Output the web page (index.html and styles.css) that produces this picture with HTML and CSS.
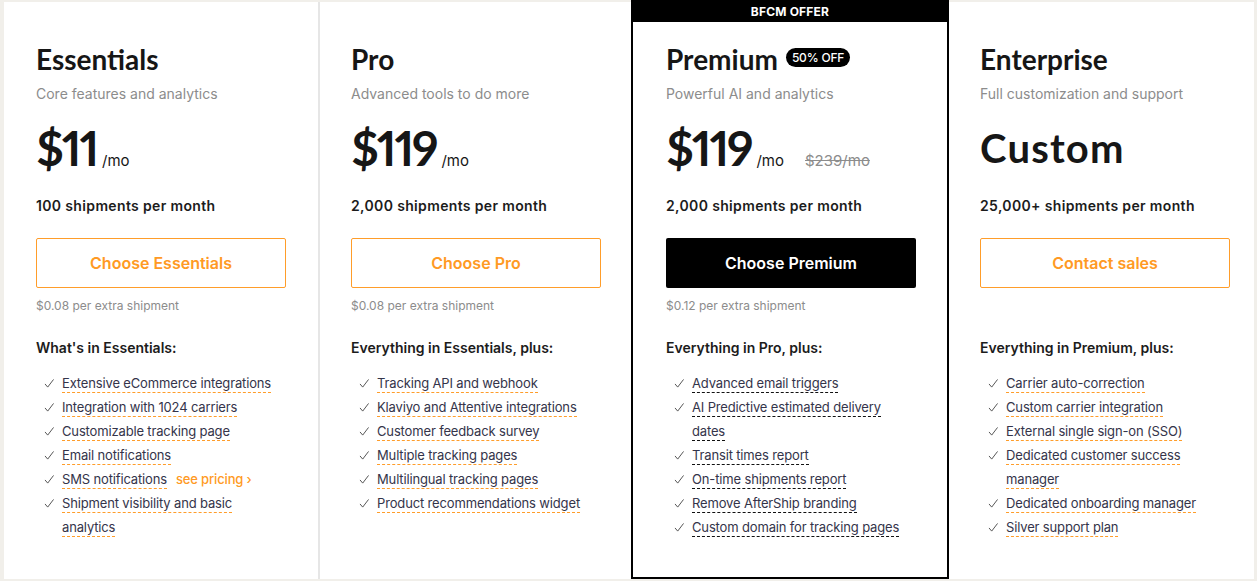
FILE: index.html
```html
<!DOCTYPE html>
<html lang="en">
<head>
<meta charset="utf-8">
<title>Pricing</title>
<link rel="stylesheet" href="styles.css">
</head>
<body>
<div class="wrap">
  <div class="plans">
    <section class="card card-ess">
      <div class="card-body">
        <div class="title-row"><h2 class="title">Essentials</h2></div>
        <p class="subtitle">Core features and analytics</p>
        <div class="price-row"><span class="price">$11</span><span class="per">/mo</span></div>
        <p class="quota">100 shipments per month</p>
        <a class="btn btn-outline" href="#">Choose Essentials</a>
        <p class="extra">$0.08 per extra shipment</p>
        <h3 class="feat-head">What's in Essentials:</h3>
        <ul class="feats">
          <li><svg class="chk" viewBox="0 0 12 10"><polyline points="1,5.5 4,9 10.5,0.5"/></svg><div class="txt"><span class="u">Extensive eCommerce integrations</span></div></li>
          <li><svg class="chk" viewBox="0 0 12 10"><polyline points="1,5.5 4,9 10.5,0.5"/></svg><div class="txt"><span class="u">Integration with 1024 carriers</span></div></li>
          <li><svg class="chk" viewBox="0 0 12 10"><polyline points="1,5.5 4,9 10.5,0.5"/></svg><div class="txt"><span class="u">Customizable tracking page</span></div></li>
          <li><svg class="chk" viewBox="0 0 12 10"><polyline points="1,5.5 4,9 10.5,0.5"/></svg><div class="txt"><span class="u">Email notifications</span></div></li>
          <li><svg class="chk" viewBox="0 0 12 10"><polyline points="1,5.5 4,9 10.5,0.5"/></svg><div class="txt"><span class="u">SMS notifications</span><a class="see" href="#">see pricing ›</a></div></li>
          <li><svg class="chk" viewBox="0 0 12 10"><polyline points="1,5.5 4,9 10.5,0.5"/></svg><div class="txt"><span class="u">Shipment visibility and basic analytics</span></div></li>
        </ul>
      </div>
    </section>

    <section class="card card-pro">
      <div class="card-body">
        <div class="title-row"><h2 class="title">Pro</h2></div>
        <p class="subtitle">Advanced tools to do more</p>
        <div class="price-row"><span class="price">$119</span><span class="per">/mo</span></div>
        <p class="quota">2,000 shipments per month</p>
        <a class="btn btn-outline" href="#">Choose Pro</a>
        <p class="extra">$0.08 per extra shipment</p>
        <h3 class="feat-head">Everything in Essentials, plus:</h3>
        <ul class="feats">
          <li><svg class="chk" viewBox="0 0 12 10"><polyline points="1,5.5 4,9 10.5,0.5"/></svg><div class="txt"><span class="u">Tracking API and webhook</span></div></li>
          <li><svg class="chk" viewBox="0 0 12 10"><polyline points="1,5.5 4,9 10.5,0.5"/></svg><div class="txt"><span class="u">Klaviyo and Attentive integrations</span></div></li>
          <li><svg class="chk" viewBox="0 0 12 10"><polyline points="1,5.5 4,9 10.5,0.5"/></svg><div class="txt"><span class="u">Customer feedback survey</span></div></li>
          <li><svg class="chk" viewBox="0 0 12 10"><polyline points="1,5.5 4,9 10.5,0.5"/></svg><div class="txt"><span class="u">Multiple tracking pages</span></div></li>
          <li><svg class="chk" viewBox="0 0 12 10"><polyline points="1,5.5 4,9 10.5,0.5"/></svg><div class="txt"><span class="u">Multilingual tracking pages</span></div></li>
          <li><svg class="chk" viewBox="0 0 12 10"><polyline points="1,5.5 4,9 10.5,0.5"/></svg><div class="txt"><span class="u">Product recommendations widget</span></div></li>
        </ul>
      </div>
    </section>

    <section class="card card-premium">
      <div class="band">BFCM OFFER</div>
      <div class="card-body">
        <div class="title-row"><h2 class="title">Premium</h2><span class="badge">50% OFF</span></div>
        <p class="subtitle">Powerful AI and analytics</p>
        <div class="price-row"><span class="price">$119</span><span class="per">/mo</span><s class="old">$239/mo</s></div>
        <p class="quota">2,000 shipments per month</p>
        <a class="btn btn-solid" href="#">Choose Premium</a>
        <p class="extra">$0.12 per extra shipment</p>
        <h3 class="feat-head">Everything in Pro, plus:</h3>
        <ul class="feats feats-dark">
          <li><svg class="chk" viewBox="0 0 12 10"><polyline points="1,5.5 4,9 10.5,0.5"/></svg><div class="txt"><span class="u">Advanced email triggers</span></div></li>
          <li><svg class="chk" viewBox="0 0 12 10"><polyline points="1,5.5 4,9 10.5,0.5"/></svg><div class="txt"><span class="u">AI Predictive estimated delivery dates</span></div></li>
          <li><svg class="chk" viewBox="0 0 12 10"><polyline points="1,5.5 4,9 10.5,0.5"/></svg><div class="txt"><span class="u">Transit times report</span></div></li>
          <li><svg class="chk" viewBox="0 0 12 10"><polyline points="1,5.5 4,9 10.5,0.5"/></svg><div class="txt"><span class="u">On-time shipments report</span></div></li>
          <li><svg class="chk" viewBox="0 0 12 10"><polyline points="1,5.5 4,9 10.5,0.5"/></svg><div class="txt"><span class="u">Remove AfterShip branding</span></div></li>
          <li><svg class="chk" viewBox="0 0 12 10"><polyline points="1,5.5 4,9 10.5,0.5"/></svg><div class="txt"><span class="u">Custom domain for tracking pages</span></div></li>
        </ul>
      </div>
    </section>

    <section class="card card-ent">
      <div class="card-body">
        <div class="title-row"><h2 class="title">Enterprise</h2></div>
        <p class="subtitle">Full customization and support</p>
        <div class="price-row"><span class="price price-custom">Custom</span></div>
        <p class="quota">25,000+ shipments per month</p>
        <a class="btn btn-outline" href="#">Contact sales</a>
        <p class="extra">&nbsp;</p>
        <h3 class="feat-head">Everything in Premium, plus:</h3>
        <ul class="feats">
          <li><svg class="chk" viewBox="0 0 12 10"><polyline points="1,5.5 4,9 10.5,0.5"/></svg><div class="txt"><span class="u">Carrier auto-correction</span></div></li>
          <li><svg class="chk" viewBox="0 0 12 10"><polyline points="1,5.5 4,9 10.5,0.5"/></svg><div class="txt"><span class="u">Custom carrier integration</span></div></li>
          <li><svg class="chk" viewBox="0 0 12 10"><polyline points="1,5.5 4,9 10.5,0.5"/></svg><div class="txt"><span class="u">External single sign-on (SSO)</span></div></li>
          <li><svg class="chk" viewBox="0 0 12 10"><polyline points="1,5.5 4,9 10.5,0.5"/></svg><div class="txt"><span class="u">Dedicated customer success manager</span></div></li>
          <li><svg class="chk" viewBox="0 0 12 10"><polyline points="1,5.5 4,9 10.5,0.5"/></svg><div class="txt"><span class="u">Dedicated onboarding manager</span></div></li>
          <li><svg class="chk" viewBox="0 0 12 10"><polyline points="1,5.5 4,9 10.5,0.5"/></svg><div class="txt"><span class="u">Silver support plan</span></div></li>
        </ul>
      </div>
    </section>
  </div>
</div>
</body>
</html>
```

FILE: styles.css
```css
* { box-sizing: border-box; }
html, body { margin: 0; padding: 0; }
body {
  background: #f1efea;
  font-family: Inter, "Noto Sans", sans-serif;
  color: #1c1c1c;
  height: 581px;
  overflow: hidden;
}
.wrap {
  padding: 2px 3px 0 4px;
}
.plans {
  display: grid;
  grid-template-columns: 316px 311px 318px 1fr;
  height: 577px;
}
.card {
  background: #fff;
  display: flex;
  flex-direction: column;
}
.card-body {
  padding: 39px 24px 0 32px;
}
.card-ess { border-right: 2px solid #e6e6e6; }
.card-pro .card-body, .card-ent .card-body { padding-left: 31px; }
.card-premium {
  border: 2px solid #000;
  margin-top: -2px;
}
.card-premium .card-body { padding-top: 19px; padding-left: 33px; }
.band {
  background: #000;
  color: #fff;
  height: 20px;
  font-size: 12px;
  font-weight: 700;
  line-height: 20px;
  text-align: center;
  letter-spacing: 0.2px;
}
.title-row {
  display: flex;
  align-items: center;
  gap: 8px;
}
.title {
  margin: 0;
  font-family: Lato, Inter, sans-serif;
  font-weight: 700;
  font-size: 28px;
  line-height: 36px;
  color: #161616;
}
.badge {
  background: #000;
  color: #fff;
  font-size: 12px;
  font-weight: 500;
  line-height: 19px;
  padding: 0 6px;
  border-radius: 10px;
  margin-top: -3px;
  letter-spacing: -0.2px;
}
.subtitle {
  margin: 7px 0 0;
  font-size: 14px;
  line-height: 20px;
  color: #8c8c8c;
}
.price-row {
  display: flex;
  align-items: baseline;
  margin-top: 16px;
  height: 56px;
}
.price {
  font-family: Lato, Inter, sans-serif;
  font-weight: 700;
  font-size: 48px;
  line-height: 56px;
  font-variant-numeric: proportional-nums;
  letter-spacing: -2.2px;
  color: #161616;
}
.price-custom {
  font-size: 40px;
  letter-spacing: 1.2px;
}
.per {
  font-size: 15px;
  color: #161616;
  margin-left: 5px;
}
.old {
  font-size: 15px;
  color: #8c8c8c;
  margin-left: 21px;
}
.quota {
  margin: 20px 0 0;
  font-size: 14px;
  font-weight: 600;
  line-height: 20px;
  letter-spacing: 0.35px;
  color: #1c1c1c;
}
.btn {
  display: flex;
  align-items: center;
  justify-content: center;
  width: 250px;
  height: 50px;
  margin-top: 22px;
  font-size: 16px;
  font-weight: 600;
  text-decoration: none;
  border-radius: 2px;
}
.btn-outline {
  border: 1px solid #ff9d2a;
  color: #ff9a24;
}
.btn-solid {
  background: #000;
  color: #fff;
}
.extra {
  margin: 9px 0 0;
  font-size: 12px;
  line-height: 18px;
  color: #8c8c8c;
}
.feat-head {
  margin: 23px 0 0;
  font-size: 14px;
  font-weight: 600;
  line-height: 20px;
  color: #1c1c1c;
}
.feats {
  list-style: none;
  margin: 13px 0 0;
  padding: 0;
}
.feats li {
  display: flex;
  align-items: flex-start;
  font-size: 13px;
  line-height: 24px;
  letter-spacing: -0.15px;
  color: #34344a;
}
.chk {
  flex: none;
  width: 11px;
  height: 9px;
  margin: 8px 7px 0 8px;
  fill: none;
  stroke: #555;
  stroke-width: 1.1;
}
.txt {
  max-width: 216px;
}
.u {
  border-bottom: 1px dashed #ff9d2a;
  padding-bottom: 1px;
}
.feats-dark .u {
  border-bottom-color: #111;
}
.see {
  margin-left: 9px;
  color: #ff9a24;
  text-decoration: none;
  font-weight: 500;
}
```
